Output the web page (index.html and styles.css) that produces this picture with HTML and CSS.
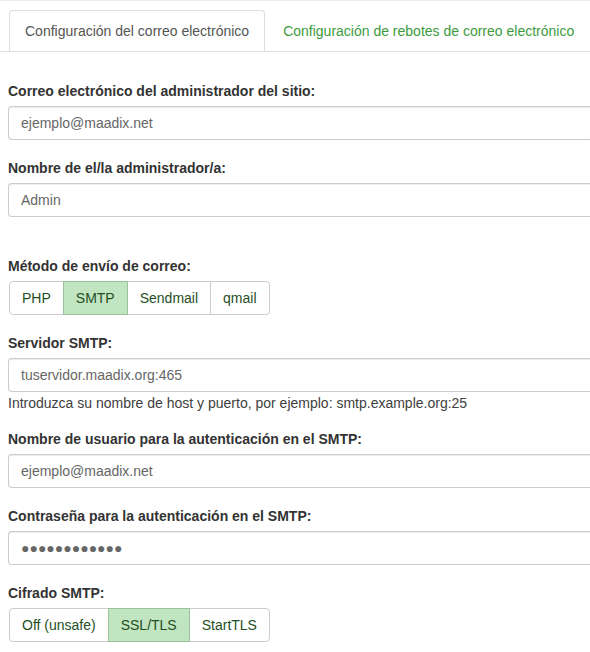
FILE: index.html
```html
<!DOCTYPE html>
<html lang="es">
<head>
<meta charset="utf-8">
<title>Configuración del correo electrónico</title>
<link rel="stylesheet" href="styles.css">
</head>
<body>
<div class="page">
  <ul class="tabs">
    <li class="tab active"><a href="#">Configuración del correo electrónico</a></li>
    <li class="tab"><a href="#">Configuración de rebotes de correo electrónico</a></li>
  </ul>
  <form class="form">
    <div class="group">
      <label class="label">Correo electrónico del administrador del sitio:</label>
      <div class="input">ejemplo@maadix.net</div>
    </div>
    <div class="group">
      <label class="label">Nombre de el/la administrador/a:</label>
      <div class="input">Admin</div>
    </div>
    <div class="group spaced">
      <label class="label">Método de envío de correo:</label>
      <div class="btn-group">
        <span class="btn">PHP</span>
        <span class="btn on">SMTP</span>
        <span class="btn">Sendmail</span>
        <span class="btn">qmail</span>
      </div>
    </div>
    <div class="group">
      <label class="label">Servidor SMTP:</label>
      <div class="input">tuservidor.maadix.org:465</div>
      <p class="help">Introduzca su nombre de host y puerto, por ejemplo: smtp.example.org:25</p>
    </div>
    <div class="group">
      <label class="label">Nombre de usuario para la autenticación en el SMTP:</label>
      <div class="input">ejemplo@maadix.net</div>
    </div>
    <div class="group">
      <label class="label">Contraseña para la autenticación en el SMTP:</label>
      <div class="input dots">●●●●●●●●●●●●</div>
    </div>
    <div class="group">
      <label class="label">Cifrado SMTP:</label>
      <div class="btn-group">
        <span class="btn">Off (unsafe)</span>
        <span class="btn on">SSL/TLS</span>
        <span class="btn">StartTLS</span>
      </div>
    </div>
  </form>
</div>
</body>
</html>
```
FILE: styles.css
```css
html, body {
  margin: 0;
  padding: 0;
  background: #fff;
  overflow: hidden;
}
body {
  font-family: "Liberation Sans", Arial, sans-serif;
  font-size: 14px;
  line-height: 20px;
  color: #333;
}
.page {
  border-top: 1px solid #ececec;
}
.tabs {
  list-style: none;
  margin: 9px 0 0;
  padding: 0 0 0 9px;
  display: flex;
  border-bottom: 1px solid #ddd;
  overflow: hidden;
}
.tab {
  margin-bottom: -1px;
  margin-right: 2px;
  flex: none;
}
.tab a {
  display: block;
  padding: 10px 15px;
  line-height: 20px;
  border: 1px solid transparent;
  border-radius: 4px 4px 0 0;
  color: #3d9b3d;
  text-decoration: none;
  white-space: nowrap;
}
.tab.active a {
  color: #555;
  background: #fff;
  border-color: #ddd #ddd transparent;
}
.form {
  padding: 29px 0 0 8px;
}
.group {
  margin-bottom: 18px;
}
.group.spaced {
  margin-top: 39px;
}
.label {
  display: block;
  font-weight: bold;
  margin-bottom: 5px;
}
.input {
  box-sizing: border-box;
  height: 34px;
  padding: 6px 12px;
  border: 1px solid #ccc;
  border-right: none;
  border-radius: 4px 0 0 4px;
  color: #666;
  box-shadow: inset 0 1px 1px rgba(0, 0, 0, 0.075);
  white-space: nowrap;
  overflow: hidden;
}
.input.dots {
  color: #666;
}
.help {
  margin: 1px 0 -2px;
  color: #404040;
}
.btn-group {
  display: inline-flex;
  margin-left: 1px;
}
.btn {
  box-sizing: border-box;
  height: 34px;
  padding: 6px 12px;
  border: 1px solid #ccc;
  color: #1f4f1f;
  background: #fff;
  margin-left: -1px;
}
.btn:first-child {
  margin-left: 0;
  border-radius: 4px 0 0 4px;
}
.btn:last-child {
  border-radius: 0 4px 4px 0;
}
.btn.on {
  background: #c1e4c1;
  border-color: #9cc29c;
  position: relative;
  z-index: 1;
}
```
